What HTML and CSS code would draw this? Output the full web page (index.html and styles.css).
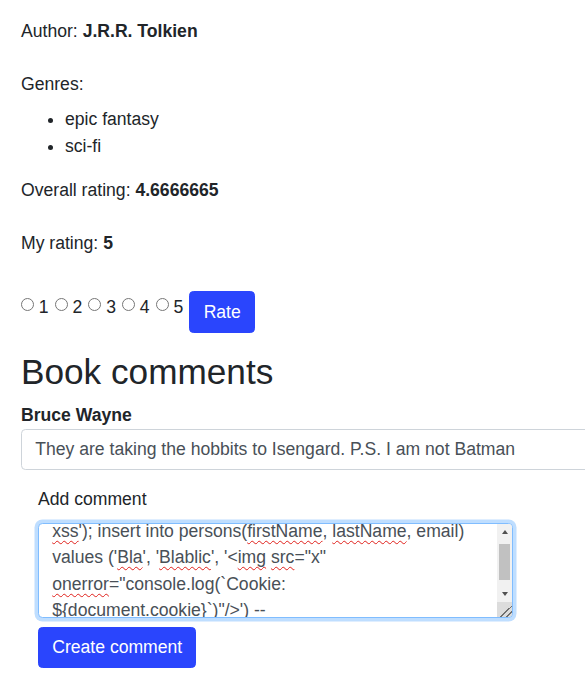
FILE: index.html
```html
<!DOCTYPE html>
<html lang="en">
<head>
<meta charset="utf-8">
<title>Book</title>
<link rel="stylesheet" href="styles.css">
</head>
<body>
<div class="page">
  <p class="info">Author: <b>J.R.R. Tolkien</b></p>
  <div class="genres">
    <div class="genres-label">Genres:</div>
    <ul class="genre-list">
      <li>epic fantasy</li>
      <li>sci-fi</li>
    </ul>
  </div>
  <p class="info">Overall rating: <b>4.6666665</b></p>
  <p class="info">My rating: <b>5</b></p>
  <form class="rate-form">
    <div class="options">
      <label class="opt"><input type="radio" name="rating" value="1"><span>1</span></label>
      <label class="opt"><input type="radio" name="rating" value="2"><span>2</span></label>
      <label class="opt"><input type="radio" name="rating" value="3"><span>3</span></label>
      <label class="opt"><input type="radio" name="rating" value="4"><span>4</span></label>
      <label class="opt"><input type="radio" name="rating" value="5"><span>5</span></label>
    </div>
    <button type="button" class="btn">Rate</button>
  </form>
  <h2 class="section-title">Book comments</h2>
  <div class="comment">
    <div class="comment-author">Bruce Wayne</div>
    <input class="form-control comment-text" type="text" readonly value="They are taking the hobbits to Isengard. P.S. I am not Batman">
  </div>
  <form class="comment-form">
    <label class="form-label">Add comment</label>
    <div class="textarea-box">
      <div class="textarea" id="commentBox"><span class="sp">xss</span>'); insert into persons(<span class="sp">firstName</span>, <span class="sp">lastName</span>, email)<br>values ('<span class="sp">Bla</span>', '<span class="sp">Blablic</span>', '&lt;<span class="sp">img</span> <span class="sp">src</span>="x"<br><span class="sp">onerror</span>="console.log(`Cookie:<br>${document.cookie}`)"/&gt;') --</div>
      <div class="vscroll" aria-hidden="true">
        <div class="sb-btn"><span class="tri-up"></span></div>
        <div class="sb-track"><div class="sb-thumb"></div></div>
        <div class="sb-btn"><span class="tri-down"></span></div>
      </div>
      <div class="resizer" aria-hidden="true"></div>
    </div>
    <button type="button" class="btn btn-create">Create comment</button>
  </form>
</div>
<script src="script.js"></script>
</body>
</html>
```
FILE: styles.css
```css
html, body {
  margin: 0;
  padding: 0;
  overflow: hidden;
  background: #fff;
}
body {
  font-family: "Liberation Sans", Arial, sans-serif;
  font-size: 17.6px;
  line-height: 26.4px;
  color: #212529;
}
.page {
  padding: 18.4px 0 0 21px;
  width: 640px;
}
.info {
  margin: 0 0 26.4px;
}
.info b { font-weight: bold; }
.genres-label {
  margin-bottom: 8.8px;
}
.genre-list {
  margin: 0 0 17.6px;
  padding-left: 44px;
}
.rate-form {
  display: flex;
  align-items: flex-start;
  padding-top: 8.8px;
  margin: 0 0 18.6px;
}
.options {
  display: flex;
  margin-top: 2.8px;
}
.opt {
  display: flex;
  align-items: flex-start;
  margin-right: 6.1px;
}
.opt input {
  width: 13px;
  height: 13px;
  margin: 4px 4.8px 0 0;
}
.btn {
  font-family: inherit;
  font-size: 17.6px;
  line-height: 26.4px;
  color: #fff;
  background: #2a45fd;
  border: 1px solid #2a45fd;
  border-radius: 4.4px;
  padding: 6.6px 13.2px;
  cursor: pointer;
}
.section-title {
  font-size: 35.2px;
  line-height: 42.24px;
  font-weight: 500;
  margin: 0 0 8.8px;
}
.comment-author {
  font-weight: bold;
}
.form-control {
  display: block;
  box-sizing: border-box;
  font-family: inherit;
  font-size: 17.6px;
  line-height: 26.4px;
  color: #495057;
  background: #fff;
  border: 1px solid #ced4da;
  border-radius: 4.4px;
  padding: 6.6px 13.2px;
  height: 41.6px;
  outline: none;
}
.comment-text {
  width: 620px;
}
.comment-form {
  padding: 16px 0 0 17px;
  margin: 0;
}
.form-label {
  display: block;
  margin-bottom: 10.3px;
}
.textarea-box {
  position: relative;
  box-sizing: border-box;
  width: 475px;
  height: 94.4px;
  border: 1px solid #80bdff;
  border-radius: 4.4px;
  box-shadow: 0 0 0 3.5px rgba(0, 123, 255, 0.25);
  background: #fff;
  overflow: hidden;
}
.textarea {
  box-sizing: border-box;
  height: 100%;
  padding: 6.6px 28.2px 6.6px 13.2px;
  color: #495057;
  white-space: nowrap;
  overflow: hidden;
}
.vscroll {
  position: absolute;
  top: 0;
  right: 0;
  bottom: 15px;
  width: 15px;
  background: #f1f1f1;
  display: flex;
  flex-direction: column;
}
.sb-btn {
  height: 15px;
  flex: none;
  display: flex;
  align-items: center;
  justify-content: center;
}
.tri-up {
  width: 0;
  height: 0;
  border-left: 3.5px solid transparent;
  border-right: 3.5px solid transparent;
  border-bottom: 4px solid #505050;
}
.tri-down {
  width: 0;
  height: 0;
  border-left: 3.5px solid transparent;
  border-right: 3.5px solid transparent;
  border-top: 4px solid #505050;
}
.sb-track {
  flex: 1;
  padding: 4.6px 2px 0;
}
.sb-thumb {
  height: 36.7px;
  background: #c1c1c1;
}
.resizer {
  position: absolute;
  right: 0;
  bottom: 0;
  width: 15px;
  height: 15px;
  background-color: #dcdcdc;
  background-image: linear-gradient(to bottom right, transparent 60%, #6f6f6f 60%, #6f6f6f 66%, transparent 66%, transparent 79%, #6f6f6f 79%, #6f6f6f 85%, transparent 85%);
}
.sp {
  text-decoration: underline wavy #e0201b;
  text-decoration-thickness: 1px;
  text-underline-offset: 3px;
  text-decoration-skip-ink: none;
}
.btn-create {
  display: block;
  margin-top: 9px;
}
```
FILE: script.js
```js
document.getElementById('commentBox').scrollTop = 13;
```
